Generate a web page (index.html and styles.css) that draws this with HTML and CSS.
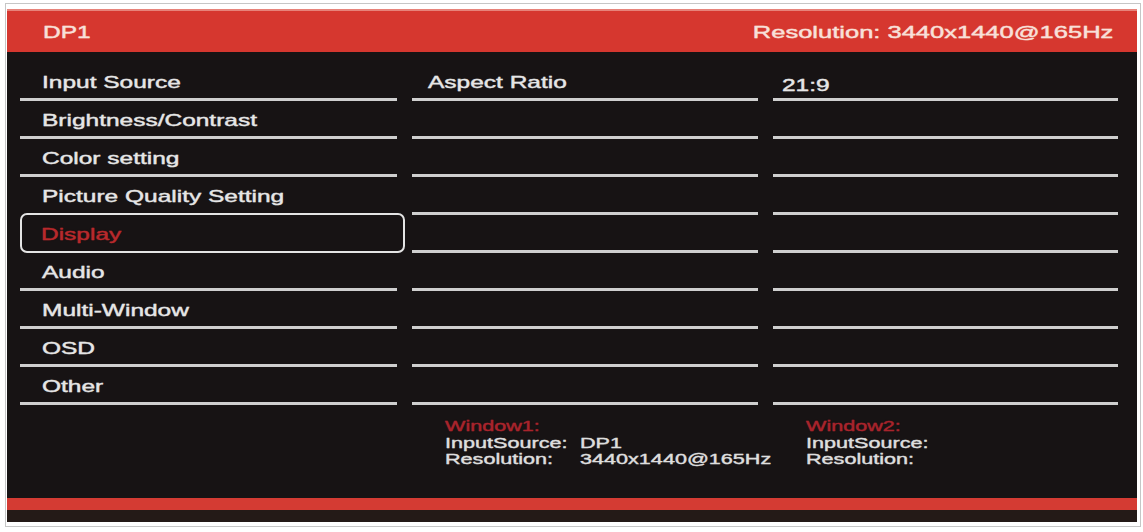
FILE: index.html
```html
<!DOCTYPE html>
<html lang="en">
<head>
<meta charset="utf-8">
<title>OSD Menu</title>
<link rel="stylesheet" href="styles.css">
</head>
<body>
<div class="frame">
  <div class="panel">
    <header class="head">
      <span class="t">DP1</span>
      <span class="t tr">Resolution: 3440x1440@165Hz</span>
    </header>
    <main class="menu">
      <section class="col c1">
        <div class="row"><span class="t">Input Source</span></div>
        <div class="row"><span class="t">Brightness/Contrast</span></div>
        <div class="row"><span class="t">Color setting</span></div>
        <div class="row nolin"><span class="t">Picture Quality Setting</span></div>
        <div class="row sel"><span class="t">Display</span></div>
        <div class="row"><span class="t">Audio</span></div>
        <div class="row"><span class="t">Multi-Window</span></div>
        <div class="row"><span class="t">OSD</span></div>
        <div class="row"><span class="t">Other</span></div>
      </section>
      <section class="col c2">
        <div class="row"><span class="t">Aspect Ratio</span></div>
        <div class="row"></div>
        <div class="row"></div>
        <div class="row"></div>
        <div class="row"></div>
        <div class="row"></div>
        <div class="row"></div>
        <div class="row"></div>
        <div class="row"></div>
        <div class="info">
          <div class="info-title"><span class="t">Window1:</span></div>
          <div class="info-row"><span class="t">InputSource:</span><span class="t">DP1</span></div>
          <div class="info-row"><span class="t">Resolution:</span><span class="t">3440x1440@165Hz</span></div>
        </div>
      </section>
      <section class="col c3">
        <div class="row"><span class="t val">21:9</span></div>
        <div class="row"></div>
        <div class="row"></div>
        <div class="row"></div>
        <div class="row"></div>
        <div class="row"></div>
        <div class="row"></div>
        <div class="row"></div>
        <div class="row"></div>
        <div class="info">
          <div class="info-title"><span class="t">Window2:</span></div>
          <div class="info-row"><span class="t">InputSource:</span></div>
          <div class="info-row"><span class="t">Resolution:</span></div>
        </div>
      </section>
    </main>
    <div class="stripe"></div>
    <div class="foot"></div>
  </div>
</div>
</body>
</html>
```

FILE: styles.css
```css
html, body {
  margin: 0;
  padding: 0;
  background: #ffffff;
}

body {
  font-family: "Liberation Sans", Arial, sans-serif;
}

.frame {
  margin: 3px 0 0 5px;
  width: 1134px;
  border: 1px solid #c6c6c6;
  padding: 5px 0 4px 0;
  background: #ffffff;
}

.panel {
  width: 1130px;
  margin-left: 1px;
  background: #171314;
}

.t {
  display: inline-block;
  white-space: nowrap;
  transform: scaleX(1.44);
  transform-origin: 0 50%;
  -webkit-text-stroke: 0.35px currentColor;
  text-shadow: 0 0 1px rgba(255, 255, 255, 0.35);
}

.tr {
  transform: scaleX(1.5);
  transform-origin: 100% 50%;
}

.head {
  height: 43px;
  box-sizing: border-box;
  background: #d6372f;
  border-top: 2px solid #e7837a;
  display: flex;
  justify-content: space-between;
  align-items: center;
  padding: 3px 24px 0 36px;
  color: #f8e0d9;
  font-size: 17px;
}

.head .t {
  text-shadow: 0 0 1px rgba(255, 230, 220, 0.5);
}

.menu {
  height: 446px;
  box-sizing: border-box;
  padding: 11px 0 0 13px;
  display: grid;
  grid-template-columns: 377px 346px 345px;
  column-gap: 15px;
  align-items: start;
}

.col {
  display: flex;
  flex-direction: column;
}

.row {
  height: 38px;
  box-sizing: border-box;
  border-bottom: 3px solid #cfcfcf;
  display: flex;
  align-items: center;
  padding: 4px 0 0 22px;
  font-size: 17px;
  color: #e6e6e6;
}

.c2 .row {
  padding-left: 16px;
}

.c3 .row {
  padding-left: 9px;
}

.c3 .val {
  margin-top: 7px;
}

.row.nolin {
  border-bottom-color: transparent;
}

.row.sel {
  height: 40px;
  margin-top: -2px;
  margin-right: -8px;
  border: 2.5px solid #e4e4e4;
  border-radius: 7px;
  padding-left: 19px;
  color: #b8292c;
}

.row.sel .t {
  text-shadow: 0 0 1px rgba(200, 40, 40, 0.5);
}

.info {
  margin-top: 13px;
  padding-left: 33px;
  font-size: 15px;
  line-height: 16.5px;
  color: #dedede;
}

.info-title {
  color: #a8242c;
}

.info-title .t {
  text-shadow: 0 0 1px rgba(180, 30, 40, 0.5);
}

.info-row {
  display: grid;
  grid-template-columns: 135px auto;
}

.stripe {
  height: 12px;
  background: #d43b33;
}

.foot {
  height: 12px;
  background: #241a17;
}
```
